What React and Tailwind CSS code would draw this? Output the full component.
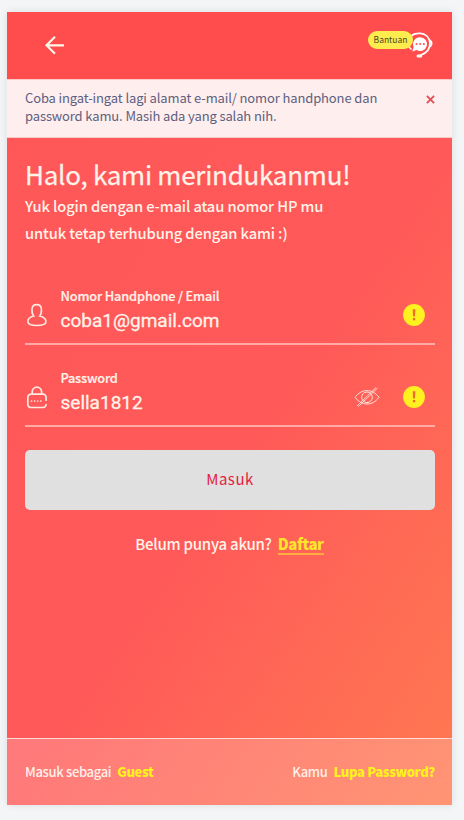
const Person = () => (
  <svg width="20" height="24" viewBox="0 0 20 24" fill="none" stroke="#ffe9e0" strokeWidth="1.600">
    <path d="M6.700 13C4.700 11 4.900 8.400 5 6 5.200 3 7.200 1.600 9.700 1.600s4.500 1.400 4.700 4.400c.1 2.400.3 5-1.700 7 4 1 6.300 2.900 6.300 5.500 0 2.600-4 4-9.300 4S.8 21.100.8 18.500c0-2.600 1.900-4.500 5.900-5.500z" />
  </svg>
);

const Lock = () => (
  <svg width="20" height="23" viewBox="0 0 20 23" fill="none" stroke="#ffe9e0" strokeWidth="1.700" strokeLinecap="round">
    <path d="M5.200 8V5.800a4.700 4.700 0 0 1 9.400 0V8" />
    <path d="M19.100 14.200v-2.700A3.300 3.300 0 0 0 15.800 8.200H4.100A3.300 3.300 0 0 0 .8 11.500v6.700a3.300 3.300 0 0 0 3.300 3.300h11.700c1.900 0 3.100-1 3.300-3" />
    <path d="M4.500 15h11.500" strokeDasharray="0.100 3" />
  </svg>
);

const EyeOff = () => (
  <svg width="26" height="22" viewBox="0 0 26 22" fill="none" stroke="#ffe3dc" strokeWidth="1">
    <path d="M1 11.300C4.500 6.800 8.500 4.600 13 4.600s8.500 2.200 12 6.700c-3.500 4.500-7.500 6.700-12 6.700S4.500 15.800 1 11.300z" />
    <circle cx="13" cy="11.300" r="5.300" />
    <path d="M3 20 22 1.500M4.500 20.500 23.500 2" strokeWidth=".9" />
  </svg>
);

const Warning = () => (
  <svg width="22" height="22" viewBox="0 0 22 22">
    <circle cx="11" cy="11" r="10.900" fill="#fff11f" />
    <path d="M9.700 5.300h2.700l-.4 7.200h-1.900z" fill="#ee6b2d" />
    <rect x="9.900" y="14" width="2.300" height="2.300" fill="#ee6b2d" />
  </svg>
);

const Headset = () => (
  <svg width="26" height="28" viewBox="0 0 26 28" fill="none">
    <path d="M2.500 5.500C5.200 2.900 8.500 2.200 12 2.400c5.500.3 9.300 3.900 9.900 9.100.5 6-3.300 10.500-9.400 12.700" stroke="#fff" strokeWidth="1.700" />
    <path d="M21.500 8.200c2 .9 3 2.100 3 4.100s-1 3.600-3.200 4.800c1.200-3 1.300-6 .2-8.900z" fill="#fff" />
    <path d="M10 25h2.700" stroke="#fff" strokeWidth="3" strokeLinecap="round" />
    <path d="M12 6.200a6.900 6.900 0 1 1-3.300 12.900L4.300 20.500l1.400-4.400A6.900 6.900 0 0 1 12 6.200z" fill="#fff" />
    <path d="M.5 15.500 3.500 18.500" stroke="#fff" strokeWidth="1.500" />
    <g fill="#ff4d4d">
      <circle cx="8.500" cy="13" r="1" />
      <circle cx="12.200" cy="13" r="1" />
      <circle cx="15.900" cy="13" r="1" />
    </g>
  </svg>
);

export default function App() {
  return (
    <div className="h-[820px] w-[464px] overflow-hidden bg-[#f4f5f6] pt-3 pl-[7px] font-['Noto_Sans_CJK_SC',sans-serif] whitespace-nowrap">
      <div className="flex h-[793px] w-[445px] flex-col bg-[linear-gradient(124deg,#ff5758_0%,#ff5959_54%,#ff7a51_100%)] shadow-[0_0_8px_rgba(0,0,0,0.1)]">
        <header className="flex h-[67px] shrink-0 items-start justify-between bg-[#ff4d4d] pr-[18px] pl-[38px]">
          <svg className="mt-6" width="20" height="20" viewBox="0 0 20 20" fill="none" stroke="#fff8e8" strokeWidth="2.200">
            <path d="M19 9.300H1.500M10 .8 1.500 9.300 10 17.800" />
          </svg>
          <div className="mt-[19px] flex">
            <span className="z-10 -mr-[5px] h-[18px] w-[45px] rounded-full bg-[#fdec4d] text-center text-[8.500px] leading-[17px] text-[#4c4a26]">Bantuan</span>
            <Headset />
          </div>
        </header>

        <div className="flex h-[59px] shrink-0 items-start justify-between border-y border-[#fbc9c9] bg-[#ffeeee] pt-[9px] pr-[17px] pl-[18px] text-[13px] leading-[18px] tracking-[-0.125px] text-[#5c607e]">
          <p>Coba ingat-ingat lagi alamat e-mail/ nomor handphone dan<br />password kamu. Masih ada yang salah nih.</p>
          <svg className="mt-[6px]" width="9" height="9" viewBox="0 0 8 8" stroke="#e25058" strokeWidth="1.700">
            <path d="m.8.8 6.400 6.400M7.200.8.8 7.200" />
          </svg>
        </div>

        <main className="flex grow flex-col px-[18px] pt-[18px] text-[#fff3ea]">
          <h1 className="h-9 text-[26px] leading-9 tracking-[-0.260px] [-webkit-text-stroke:0.25px_#fff3ea]">Halo, kami merindukanmu!</h1>
          <p className="text-[14.700px] leading-[27px] font-medium tracking-[-0.100px]">Yuk login dengan e-mail atau nomor HP mu<br />untuk tetap terhubung dengan kami :)</p>

          <div className="mt-10 flex h-[59px] w-[410px] items-start border-b-2 border-[#ffaaa5]">
            <div className="mt-[17px] ml-[2px] w-[33.500px]"><Person /></div>
            <div className="grow">
              <div className="h-5 text-[12.750px] leading-5 font-medium tracking-[-0.140px] [-webkit-text-stroke:0.2px_#fff3ea]">Nomor Handphone / Email</div>
              <div className="mt-[3px] h-6 font-[Roboto] text-[19px] leading-6 [-webkit-text-stroke:0.3px_#fff3ea]">coba1@gmail.com</div>
            </div>
            <div className="mt-[18px] mr-[10px]"><Warning /></div>
          </div>

          <div className="mt-[23px] flex h-[59px] w-[410px] items-start border-b-2 border-[#ffaaa5]">
            <div className="mt-[18px] ml-[2px] w-[33.500px]"><Lock /></div>
            <div className="grow">
              <div className="h-5 text-[12.750px] leading-5 font-medium tracking-[-0.200px] [-webkit-text-stroke:0.2px_#fff3ea]">Password</div>
              <div className="mt-[3px] h-6 font-[Roboto] text-[19px] leading-6 [-webkit-text-stroke:0.3px_#fff3ea]">sella1812</div>
            </div>
            <div className="mt-[18px] mr-[23px]"><EyeOff /></div>
            <div className="mt-[18px] mr-[10px]"><Warning /></div>
          </div>

          <button className="mt-[23px] h-[60px] w-[410px] rounded-[5px] bg-[#e0e0e0] pb-[2px] text-[15px] leading-[58px] tracking-[0.5px] text-[#e3223f]">Masuk</button>

          <p className="mt-[22px] flex justify-center text-[15px] leading-6 font-medium">
            <span className="tracking-[-0.250px]">Belum punya akun?</span>
            <span className="ml-[6px] h-[23px] border-b-2 border-[#ffad43] font-black tracking-[-0.4px] text-[#ffe42c]">Daftar</span>
          </p>
        </main>

        <footer className="flex h-[67px] shrink-0 items-center justify-between border-t border-[#ffdbd5] bg-white/20 pr-[17px] pl-[18px] text-[13px] font-medium tracking-[-0.330px] text-[#fff0e9]">
          <p>Masuk sebagai<span className="ml-[6px] font-black text-[#fff21a]">Guest</span></p>
          <p>Kamu<span className="ml-[6px] font-black text-[#fff21a]">Lupa Password?</span></p>
        </footer>
      </div>
    </div>
  );
}
